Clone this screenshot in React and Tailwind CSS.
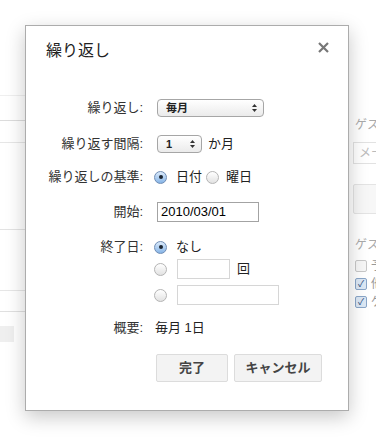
import React from "react";

const font = { fontFamily: '"Liberation Sans", "Noto Sans CJK JP", sans-serif' };

function Radio({ checked }) {
  return checked ? (
    <span className="flex h-[13px] w-[13px] shrink-0 items-center justify-center rounded-full border border-[#6f8db5] bg-gradient-to-b from-[#dcebfb] to-[#86b4e6]">
      <span className="h-[4px] w-[4px] rounded-full bg-[#1b2430]" />
    </span>
  ) : (
    <span className="h-[13px] w-[13px] shrink-0 rounded-full border border-[#b4b4b4] bg-gradient-to-b from-white to-[#e2e2e2]" />
  );
}

function Arrows() {
  return (
    <svg width="5" height="8" viewBox="0 0 5 8" className="shrink-0">
      <path d="M2.5 0 L5 3 L0 3 Z" fill="#333" />
      <path d="M2.5 8 L5 5 L0 5 Z" fill="#333" />
    </svg>
  );
}

function Select({ value, width }) {
  return (
    <div
      className={`flex h-[18px] items-center justify-between rounded-[4px] border border-[#a6a6a6] bg-gradient-to-b from-white to-[#ebebeb] pl-[8px] pr-[6px] text-[11px] font-bold text-[#222] ${width}`}
    >
      <span>{value}</span>
      <Arrows />
    </div>
  );
}

function Row({ label, className, children }) {
  return (
    <div className={`flex items-center ${className}`}>
      <div className="w-[97px] shrink-0 text-right text-[13px] text-[#333]">{label}</div>
      <div className="ml-[14px] flex items-center text-[13px] text-[#222]">{children}</div>
    </div>
  );
}

function Check({ checked, children }) {
  return (
    <div className="flex h-[14px] items-center gap-[4px] pl-[2px] leading-[14px]">
      {checked ? (
        <span className="flex h-[12px] w-[12px] shrink-0 items-center justify-center rounded-[2px] border border-[#8aa6c8] bg-[#dce8f5] text-[9px] leading-none text-[#2b4c7a]">
          ✓
        </span>
      ) : (
        <span className="h-[12px] w-[12px] shrink-0 rounded-[2px] border border-[#c8c8c8] bg-[#f7f7f7]" />
      )}
      {children}
    </div>
  );
}

export default function App() {
  return (
    <div className="relative h-[440px] w-[376px] overflow-hidden bg-white" style={font}>
      {/* page behind the dialog */}
      <div className="flex h-full">
        <div className="w-[349px] shrink-0">
          <div className="h-[96px] border-b border-[#efefef]" />
          <div className="h-[25px] border-b border-[#dcdcdc]" />
          <div className="h-[22px] border-b border-[#e6e6e6]" />
          <div className="h-[87px] border-b border-[#e3e3e3]" />
          <div className="h-[61px] border-b border-[#e6e6e6]" />
          <div className="h-[21px] border-b border-[#e0e0e0]" />
          <div className="mt-[14px] h-[16px] w-[14px] bg-[#efefef]" />
        </div>
        <div className="flex-1 overflow-hidden whitespace-nowrap pl-[4px] text-[12px] text-[#aaa]">
          <div className="mt-[116px] pl-[2px]">ゲストを追加</div>
          <div className="mt-[8px] h-[22px] w-[60px] border border-[#e2e2e2] pl-[5px] leading-[20px] text-[#bbb]">
            メールアドレス
          </div>
          <div className="mt-[20px] h-[30px] w-[60px] rounded-[2px] border border-[#e4e4e4] bg-[#f7f7f7]" />
          <div className="mt-[22px] pl-[2px]">ゲストの権限</div>
          <div className="mt-[5px] flex flex-col gap-[4px] text-[#999]">
            <Check>予定を変更する</Check>
            <Check checked>他のユーザーを招待する</Check>
            <Check checked>ゲストリストを表示する</Check>
          </div>
        </div>
      </div>

      {/* dialog */}
      <div className="absolute left-[25px] top-[25px] h-[386px] w-[324px] border border-[#acacac] bg-white shadow-[0_6px_18px_rgba(0,0,0,0.22)]">
        <div className="flex items-start justify-between pl-[20px] pr-[19px] pt-[15px]">
          <div className="text-[16px] leading-[20px] text-[#222]">繰り返し</div>
          <svg width="11" height="11" viewBox="0 0 11 11" className="mt-[1px]">
            <path d="M1 1 L10 10 M10 1 L1 10" stroke="#777" strokeWidth="2.2" />
          </svg>
        </div>

        <div className="pl-[20px]">
          <Row label="繰り返し:" className="mt-[38px] h-[18px]">
            <Select value="毎月" width="w-[107px]" />
          </Row>
          <Row label="繰り返す間隔:" className="mt-[18px] h-[18px]">
            <Select value="1" width="w-[45px]" />
            <span className="ml-[6px]">か月</span>
          </Row>
          <Row label="繰り返しの基準:" className="mt-[15px] h-[18px]">
            <div className="-ml-[3px] flex items-center">
              <Radio checked />
              <span className="ml-[9px]">日付</span>
              <span className="ml-[4px]" />
              <Radio />
              <span className="ml-[7px]">曜日</span>
            </div>
          </Row>
          <Row label="開始:" className="mt-[16px] h-[20px]">
            <div className="h-[20px] w-[102px] border border-[#a3a3a3] pl-[3px] text-[13px] leading-[18px] text-black">
              2010/03/01
            </div>
          </Row>
          <Row label="終了日:" className="mt-[16px] h-[18px]">
            <div className="-ml-[3px] flex items-center">
              <Radio checked />
              <span className="ml-[9px]">なし</span>
            </div>
          </Row>
          <Row label="" className="mt-[3px] h-[20px]">
            <div className="-ml-[3px] flex items-center">
              <Radio />
              <div className="ml-[10px] h-[20px] w-[53px] border border-[#d6d6d6]" />
              <span className="ml-[7px]">回</span>
            </div>
          </Row>
          <Row label="" className="mt-[6px] h-[20px]">
            <div className="-ml-[3px] flex items-center">
              <Radio />
              <div className="ml-[10px] h-[20px] w-[102px] border border-[#d6d6d6]" />
            </div>
          </Row>
          <Row label="概要:" className="mt-[14px] h-[18px]">
            <span className="-ml-[2px]">毎月 1日</span>
          </Row>
        </div>

        <div className="mt-[17px] flex gap-[6px] pl-[130px]">
          <button className="h-[28px] w-[72px] rounded-[2px] border border-[#dcdcdc] bg-[#f3f3f3] text-[13px] font-bold text-[#444]">
            完了
          </button>
          <button className="h-[28px] w-[88px] rounded-[2px] border border-[#dcdcdc] bg-[#f3f3f3] text-[13px] font-bold text-[#444]">
            キャンセル
          </button>
        </div>
      </div>
    </div>
  );
}
